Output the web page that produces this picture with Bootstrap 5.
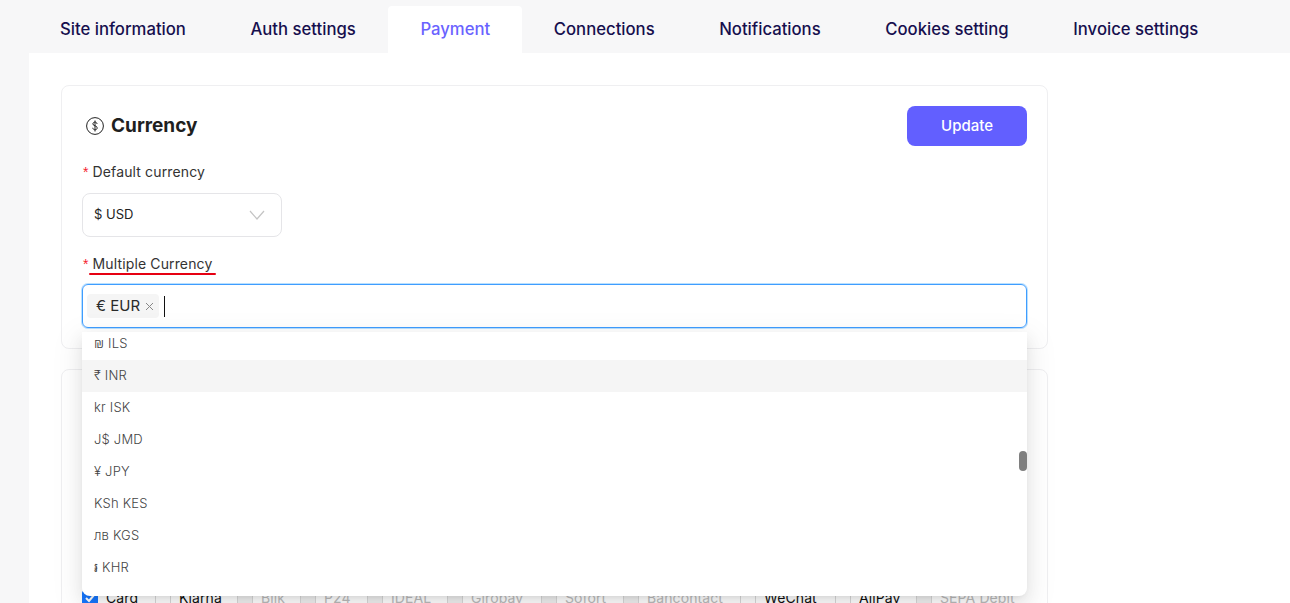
<!DOCTYPE html>
<html lang="en">
<head>
<meta charset="utf-8">
<title>Payment settings</title>
<link href="https://cdn.jsdelivr.net/npm/bootstrap@5.3.0/dist/css/bootstrap.min.css" rel="stylesheet">
<style>
html,body{height:603px;overflow:hidden}
body{background:#f7f7f8;font-family:Inter,"Liberation Sans",sans-serif;color:#1f1f1f}
.tabbar{height:53px;padding:6px 0 0 27.7px}
.tab-item{padding:0 32.3px;height:47px;font-size:16.7px;font-weight:500;color:#160f4e;border-radius:4px 4px 0 0}
.tab-item.is-on{background:#fff;color:#6a63ff;padding:0 31.3px 0 32.3px}
.sheet{background:#fff;margin-left:29px;padding:32px;height:550px;overflow:hidden}
.panel{width:987px;border:1px solid #efeff1;border-radius:8px;background:#fff;padding:20px}
.panel-one{height:264px;margin-bottom:20px}
.panel-two{height:300px;padding-top:218px}
.panel-title{font-size:19px;font-weight:700;color:#1f1f1f;line-height:24px;gap:7px}
.btn-update{width:120px;height:40px;background:#625fff;border:0;border-radius:8px;color:#fff;font-size:15px;font-weight:500}
.field-label{font-size:14px;line-height:20px;color:#333;margin:0;letter-spacing:.13px}
.req{color:#f5222d;font-family:"Liberation Sans",sans-serif;margin-left:1px;margin-right:4px}
.mark-wrap{position:relative;display:inline-block}
.red-line{position:absolute;left:-4px;right:-4px;bottom:-1px;height:2px;background:#e60012;border-radius:2px}
.select-box{width:200px;height:44px;margin-top:11px;border:1px solid #e5e5e8;border-radius:8px;padding:0 16px 0 11px;font-size:13px;color:#222}
.multi-box{height:44px;border:1px solid #3f9dff;border-radius:6px;box-shadow:0 0 0 1px rgba(5,145,255,.28);padding:0 4px;font-size:14px}
.multi-label{margin-top:17px;margin-bottom:10px}
.chip{height:24px;background:#f5f5f5;border-radius:4px;padding:0 5px 0 9px;font-size:15px;color:#2a2a2a;gap:5px}
.caret{width:1px;height:21px;background:#111;margin-left:5px}
.drop{position:absolute;left:82px;top:332px;width:945px;height:264px;background:#fff;border-radius:0 0 8px 8px;box-shadow:0 6px 16px rgba(0,0,0,.08),0 3px 6px -4px rgba(0,0,0,.12),0 9px 28px 8px rgba(0,0,0,.05);overflow:hidden}
.drop-row{height:32px;padding:0 12px;font-size:13px;font-weight:300;color:#444;letter-spacing:.2px}
.drop-row.is-hover{background:#f5f5f5}
.drop-first{margin-top:-4px}
.thumb{position:absolute;right:0;top:119px;width:8px;height:20px;border-radius:4px;background:#7f7f7f}
.pay-row{font-size:14px;line-height:20px;letter-spacing:.1px}
.pay-item{gap:8px;color:#111;white-space:nowrap;flex:none}
.pay-item.off{color:#bcbcbc}
.box{width:16px;height:16px;border:1px solid #d9d9d9;border-radius:3px;background:#fff;display:flex;flex:none}
.off .box{background:#f0f0f0}
.box.on{background:#1677ff;border-color:#1677ff}
</style>
</head>
<body>
<nav class="tabbar d-flex">
  <div class="tab-item d-flex align-items-center">Site information</div>
  <div class="tab-item d-flex align-items-center">Auth settings</div>
  <div class="tab-item is-on d-flex align-items-center">Payment</div>
  <div class="tab-item d-flex align-items-center">Connections</div>
  <div class="tab-item d-flex align-items-center">Notifications</div>
  <div class="tab-item d-flex align-items-center">Cookies setting</div>
  <div class="tab-item d-flex align-items-center">Invoice settings</div>
</nav>
<main class="sheet">
  <section class="panel panel-one">
    <div class="d-flex justify-content-between align-items-center mb-3">
      <div class="d-flex align-items-center panel-title ps-1">
        <svg width="18" height="18" viewBox="0 0 18 18" fill="none" stroke="#222" stroke-width="1"><circle cx="9" cy="9" r="8.4"/><path d="M11 6.6C10.8 5.6 10 5.1 9 5.1c-1.2 0-2.1.7-2.1 1.8 0 2.5 4.3 1.3 4.3 4 0 1.1-.9 1.9-2.2 1.9-1.1 0-2-.6-2.2-1.6M9 3.9v10.2" stroke-linecap="round"/></svg>
        <span>Currency</span>
      </div>
      <button type="button" class="btn btn-update">Update</button>
    </div>
    <p class="field-label"><span class="req">*</span>Default currency</p>
    <div class="select-box d-flex align-items-center justify-content-between">
      <span>$ USD</span>
      <svg width="16" height="10" viewBox="0 0 16 10" fill="none" stroke="#c4c4c4" stroke-width="1.2"><path d="M1 1l7 8 7-8"/></svg>
    </div>
    <p class="field-label multi-label"><span class="req">*</span><span class="mark-wrap">Multiple Currency<span class="red-line"></span></span></p>
    <div class="multi-box d-flex align-items-center">
      <span class="chip d-inline-flex align-items-center">€ EUR
        <svg width="9" height="9" viewBox="0 0 9 9" stroke="#888" stroke-width="1"><path d="M1 1l7 7M8 1l-7 7"/></svg>
      </span>
      <span class="caret"></span>
    </div>
  </section>
  <section class="panel panel-two">
    <div class="pay-row d-flex" id="pay"></div>
  </section>
</main>
<div class="drop">
  <div class="drop-row drop-first d-flex align-items-center">₪ ILS</div>
  <div class="drop-row is-hover d-flex align-items-center">₹ INR</div>
  <div class="drop-row d-flex align-items-center">kr ISK</div>
  <div class="drop-row d-flex align-items-center">J$ JMD</div>
  <div class="drop-row d-flex align-items-center">¥ JPY</div>
  <div class="drop-row d-flex align-items-center">KSh KES</div>
  <div class="drop-row d-flex align-items-center">лв KGS</div>
  <div class="drop-row d-flex align-items-center">៛ KHR</div>
  <div class="thumb"></div>
</div>
<script>
var check='<svg width="14" height="14" viewBox="0 0 14 14" fill="none" stroke="#fff" stroke-width="2"><path d="M3 7l3 3 5-6"/></svg>';
var items=[["Card",1,0,73],["Klarna",0,0,82],["Blik",0,1,63],["P24",0,1,67],["IDEAL",0,1,80],["Giropay",0,1,94],["Sofort",0,1,82],["Bancontact",0,1,117],["WeChat",0,0,95],["AliPay",0,0,81],["SEPA Debit",0,1,100]];
document.getElementById('pay').innerHTML=items.map(function(i){return '<label class="pay-item d-flex align-items-center'+(i[2]?' off':'')+'" style="width:'+i[3]+'px"><span class="box'+(i[1]?' on':'')+'">'+(i[1]?check:'')+'</span>'+i[0]+'</label>'}).join('');
</script>
<script src="https://cdn.jsdelivr.net/npm/bootstrap@5.3.0/dist/js/bootstrap.bundle.min.js"></script>
</body>
</html>
